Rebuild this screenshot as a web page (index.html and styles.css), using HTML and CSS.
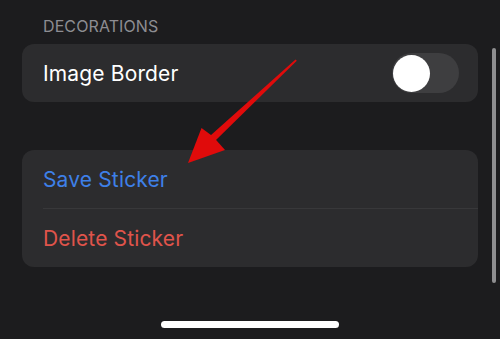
FILE: index.html
```html
<!DOCTYPE html>
<html>
<head>
<meta charset="utf-8">
<link rel="stylesheet" href="styles.css">
</head>
<body>
<div class="screen">
  <div class="section-label">DECORATIONS</div>
  <div class="card">
    <div class="row row-toggle">
      <span class="row-text">Image Border</span>
      <span class="toggle"><span class="knob"></span></span>
    </div>
  </div>
  <div class="card card-actions">
    <div class="row"><span class="row-text action-save">Save Sticker</span></div>
    <div class="divider"></div>
    <div class="row"><span class="row-text action-delete">Delete Sticker</span></div>
  </div>
  <div class="scrollbar"></div>
  <div class="home-indicator"></div>
  <svg class="arrow" width="500" height="339" viewBox="0 0 500 339">
    <polygon points="295.5,59.5 296.8,60.8 215.5,140.5 210.5,135.5" fill="#e00b0b"/>
    <polygon points="188,163 201.5,128 213,136.5 225,150" fill="#e00b0b"/>
  </svg>
</div>
</body>
</html>
```

FILE: styles.css
```css
html, body {
  margin: 0;
  padding: 0;
  background: #1c1c1e;
}
.screen {
  position: relative;
  width: 500px;
  height: 339px;
  overflow: hidden;
  background: #1c1c1e;
  font-family: Inter, "Liberation Sans", sans-serif;
  padding-top: 15px;
  box-sizing: border-box;
}
.section-label {
  margin-left: 43px;
  font-size: 16px;
  line-height: 22px;
  color: #8d8d92;
  letter-spacing: 0.1px;
}
.card {
  margin: 7px 22px 0 22px;
  background: #2c2c2e;
  border-radius: 12px;
  width: 456px;
}
.card-actions {
  margin-top: 48px;
}
.row {
  height: 58px;
  display: flex;
  align-items: center;
  padding: 0 19px 0 21px;
}
.row-toggle {
  justify-content: space-between;
}
.row-text {
  font-size: 21px;
  letter-spacing: 0.15px;
  color: #ffffff;
}
.action-save {
  color: #3e80e8;
}
.action-delete {
  color: #e0544b;
}
.divider {
  height: 1px;
  margin-left: 21px;
  background: #38383a;
}
.toggle {
  width: 67px;
  height: 40px;
  border-radius: 20px;
  background: #3e3e40;
  position: relative;
}
.knob {
  position: absolute;
  left: 1px;
  top: 1.5px;
  width: 37px;
  height: 37px;
  border-radius: 50%;
  background: #ffffff;
}
.scrollbar {
  position: absolute;
  left: 492px;
  top: 48px;
  width: 4px;
  height: 235px;
  border-radius: 2px;
  background: #8e8e90;
}
.home-indicator {
  position: absolute;
  left: 161px;
  top: 321px;
  width: 178px;
  height: 7px;
  border-radius: 4px;
  background: #ffffff;
}
.arrow {
  position: absolute;
  left: 0;
  top: 0;
}
```
